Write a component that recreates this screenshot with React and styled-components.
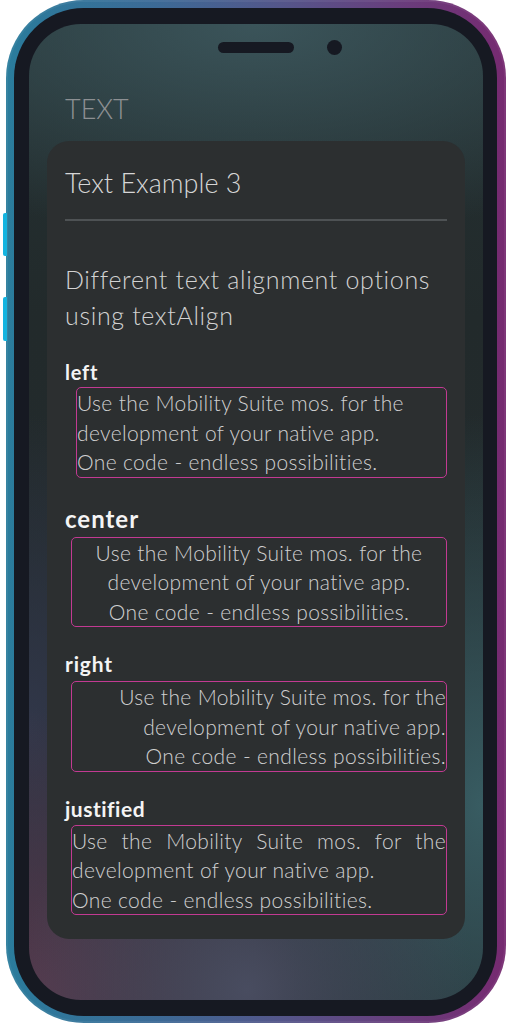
import React from "react";
import styled, { createGlobalStyle } from "styled-components";

const GlobalStyle = createGlobalStyle`
  html, body { margin: 0; padding: 0; background: #ffffff; }
  body { font-family: "Lato", "Noto Sans", sans-serif; }
  * { box-sizing: border-box; }
`;

const Stage = styled.div`
  position: relative;
  width: 512px;
  height: 1024px;
  overflow: hidden;
`;

const SideButton = styled.div`
  position: absolute;
  left: 3px;
  top: ${(p) => p.$top}px;
  width: 4px;
  height: ${(p) => p.$h}px;
  border-radius: 2px 0 0 2px;
  background: #14b4e0;
`;

const Phone = styled.div`
  margin-left: 6px;
  width: 500px;
  height: 1023px;
  border-radius: 78px;
  padding: 8px 9px 7px 8px;
  background: linear-gradient(90deg, #2a7c9c 0%, #3c6a96 30%, #54568a 55%, #6a3c7c 80%, #762a70 100%);
  box-shadow: inset 0 0 0 2px rgba(255, 255, 255, 0.06);
`;

const Bezel = styled.div`
  width: 100%;
  height: 100%;
  border-radius: 70px;
  background: #161922;
  padding: 16px 14px 16px 15px;
`;

const Screen = styled.div`
  position: relative;
  width: 100%;
  height: 100%;
  border-radius: 52px;
  overflow: hidden;
  display: flex;
  flex-direction: column;
  background:
    radial-gradient(110% 22% at 50% 0%, rgba(60, 86, 92, 0.95) 0%, rgba(60, 86, 92, 0) 100%),
    radial-gradient(50% 26% at 48% 99%, rgba(74, 78, 98, 0.95) 0%, rgba(74, 78, 98, 0) 100%),
    radial-gradient(60% 30% at 0% 100%, rgba(86, 58, 78, 1) 0%, rgba(86, 58, 78, 0) 100%),
    radial-gradient(40% 32% at 0% 72%, rgba(50, 56, 76, 0.9) 0%, rgba(50, 56, 76, 0) 100%),
    radial-gradient(50% 40% at 100% 80%, rgba(56, 92, 98, 1) 0%, rgba(56, 92, 98, 0) 100%),
    linear-gradient(to bottom, #243133 0%, #222a2b 30%, #242b30 100%);
`;

const NotchRow = styled.div`
  display: flex;
  align-items: center;
  gap: 33px;
  padding-left: 189px;
  margin-top: 16px;
  height: 15px;
`;

const Speaker = styled.div`
  width: 76px;
  height: 11px;
  border-radius: 6px;
  background: #161922;
`;

const Camera = styled.div`
  width: 15px;
  height: 15px;
  border-radius: 50%;
  background: #161922;
`;

const ScreenTitle = styled.h1`
  margin: 37px 0 0 36px;
  font-family: "Lato", sans-serif;
  font-weight: 300;
  font-size: 27px;
  line-height: 34px;
  letter-spacing: 0;
  color: #8d9093;
`;

const Card = styled.div`
  margin: 15px 18px 0 18px;
  padding: 24px 18px 24px 18px;
  border-radius: 22px;
  background: #2c2f30;
`;

const CardTitle = styled.h2`
  margin: 0;
  font-family: "Lato", sans-serif;
  font-weight: 300;
  font-size: 27px;
  line-height: 36px;
  color: #d6d6d6;
`;

const Divider = styled.hr`
  margin: 18px 0 0 0;
  border: none;
  height: 2px;
  background: #4e5254;
`;

const Lead = styled.p`
  margin: 40px 0 0 0;
  font-family: "Lato", sans-serif;
  font-weight: 300;
  font-size: 25px;
  line-height: 36px;
  letter-spacing: 0.65px;
  color: #d2d2d2;
`;

const Label = styled.h3`
  margin: ${(p) => p.$mt}px 0 0 0;
  font-family: "Lato", sans-serif;
  font-weight: 700;
  font-size: ${(p) => p.$size}px;
  line-height: ${(p) => p.$lh}px;
  letter-spacing: ${(p) => p.$ls}px;
  color: #f4f4f4;
`;

const AlignBox = styled.p`
  margin: ${(p) => p.$mt}px 0 0 ${(p) => p.$ml}px;
  border: 1px solid #c23a92;
  border-radius: 5px;
  padding: 0;
  font-family: "Lato", sans-serif;
  font-weight: 300;
  font-size: 21px;
  line-height: 29.5px;
  letter-spacing: 0.35px;
  color: #d0d0d0;
  text-align: ${(p) => p.$align};
`;

const examples = [
  { label: "left", align: "left", size: 20, ls: 0.8, lh: 24, labelMt: 27, boxMt: 3, ml: 11 },
  { label: "center", align: "center", size: 24, ls: 1, lh: 30, labelMt: 26, boxMt: 3, ml: 6 },
  { label: "right", align: "right", size: 21, ls: 0.8, lh: 26, labelMt: 24, boxMt: 4, ml: 6 },
  { label: "justified", align: "justify", size: 21, ls: 0.5, lh: 26, labelMt: 24, boxMt: 3, ml: 6 },
];

export default function App() {
  return (
    <>
      <GlobalStyle />
      <Stage>
        <SideButton $top={213} $h={43} />
        <SideButton $top={297} $h={44} />
        <Phone>
          <Bezel>
            <Screen>
              <NotchRow>
                <Speaker />
                <Camera />
              </NotchRow>
              <ScreenTitle>TEXT</ScreenTitle>
              <Card>
                <CardTitle>Text Example 3</CardTitle>
                <Divider />
                <Lead>Different text alignment options using textAlign</Lead>
                {examples.map((ex) => (
                  <React.Fragment key={ex.label}>
                    <Label $size={ex.size} $ls={ex.ls} $lh={ex.lh} $mt={ex.labelMt}>
                      {ex.label}
                    </Label>
                    <AlignBox $align={ex.align} $mt={ex.boxMt} $ml={ex.ml}>
                      Use the Mobility Suite mos. for the development of your native app.
                      <br />
                      One code - endless possibilities.
                    </AlignBox>
                  </React.Fragment>
                ))}
              </Card>
            </Screen>
          </Bezel>
        </Phone>
      </Stage>
    </>
  );
}
